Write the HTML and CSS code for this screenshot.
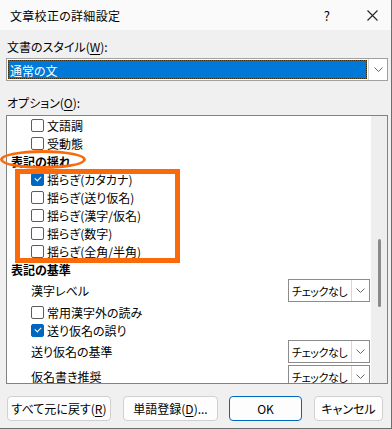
FILE: index.html
```html
<!DOCTYPE html>
<html lang="ja">
<head>
  <meta charset="UTF-8" />
  <title>文章校正の詳細設定</title>
  <link rel="stylesheet" href="styles.css">
</head>
<body>
  <div class="dialog">
    <div class="titlebar">
      <span class="title">文章校正の詳細設定</span>
      <span class="help">?</span>
      <svg class="close" width="11" height="11" viewBox="0 0 11 11">
        <path d="M0.5 0.5 L10.5 10.5 M10.5 0.5 L0.5 10.5" stroke="#222" stroke-width="1.1" fill="none"/>
      </svg>
    </div>

    <div class="content">
      <div class="label first">文書のスタイル(<u>W</u>):</div>
      <div class="combo wide">
        <div class="combo-value"><span class="selected">通常の文</span></div>
        <div class="combo-btn">
          <svg width="9" height="5" viewBox="0 0 9 5"><path d="M0.5 0.5 L4.5 4.5 L8.5 0.5" stroke="#666" fill="none"/></svg>
        </div>
      </div>

      <div class="label second">オプション(<u>O</u>):</div>
      <div class="listbox">
        <div class="items">
          <div class="row"><span class="check"></span>文語調</div>
          <div class="row"><span class="check"></span>受動態</div>
          <div class="row head">表記の揺れ</div>
          <div class="row"><span class="check on"></span>揺らぎ(カタカナ)</div>
          <div class="row"><span class="check"></span>揺らぎ(送り仮名)</div>
          <div class="row"><span class="check"></span>揺らぎ(漢字/仮名)</div>
          <div class="row"><span class="check"></span>揺らぎ(数字)</div>
          <div class="row"><span class="check"></span>揺らぎ(全角/半角)</div>
          <div class="row head">表記の基準</div>
          <div class="row setting">
            <span class="name">漢字レベル</span>
            <div class="combo small">
              <div class="combo-value">チェックなし</div>
              <div class="combo-btn">
                <svg width="9" height="5" viewBox="0 0 9 5"><path d="M0.5 0.5 L4.5 4.5 L8.5 0.5" stroke="#666" fill="none"/></svg>
              </div>
            </div>
          </div>
          <div class="row"><span class="check"></span>常用漢字外の読み</div>
          <div class="row"><span class="check on"></span>送り仮名の誤り</div>
          <div class="row setting">
            <span class="name">送り仮名の基準</span>
            <div class="combo small">
              <div class="combo-value">チェックなし</div>
              <div class="combo-btn">
                <svg width="9" height="5" viewBox="0 0 9 5"><path d="M0.5 0.5 L4.5 4.5 L8.5 0.5" stroke="#666" fill="none"/></svg>
              </div>
            </div>
          </div>
          <div class="row setting">
            <span class="name">仮名書き推奨</span>
            <div class="combo small">
              <div class="combo-value">チェックなし</div>
              <div class="combo-btn">
                <svg width="9" height="5" viewBox="0 0 9 5"><path d="M0.5 0.5 L4.5 4.5 L8.5 0.5" stroke="#666" fill="none"/></svg>
              </div>
            </div>
          </div>
        </div>
        <div class="scrollbar"><div class="thumb"></div></div>
      </div>

      <div class="buttons">
        <button class="btn reset">すべて元に戻す(<u>R</u>)</button>
        <button class="btn words">単語登録(<u>D</u>)...</button>
        <button class="btn ok">OK</button>
        <button class="btn cancel">キャンセル</button>
      </div>
    </div>

    <div class="mark-ellipse"></div>
    <div class="mark-rect"></div>
  </div>
</body>
</html>
```

FILE: styles.css
```css
body {
  margin: 0;
  font-family: "Noto Sans CJK JP", "Noto Sans", sans-serif;
  font-size: 12px;
  color: #000;
  font-feature-settings: "palt";
}
.dialog {
  position: relative;
  width: 391px;
  height: 428px;
  background: #f0f0f0;
  border-right: 1px solid #6d6d6d;
  border-bottom: 1px solid #6d6d6d;
  overflow: hidden;
}
.titlebar {
  height: 30px;
  background: #fafafa;
  display: flex;
  align-items: center;
  padding-left: 10px;
}
.title {
  flex: 1;
  font-size: 12px;
  letter-spacing: 0.3px;
}
.help {
  font-size: 13px;
  margin-right: 37px;
}
.close {
  margin-right: 13px;
}
.content {
  padding: 0 3px 0 6px;
}
.label {
  height: 18px;
  line-height: 18px;
  padding-left: 1px;
}
.label.first {
  margin-top: 8px;
  margin-bottom: 2px;
}
.label.second {
  margin-top: 13px;
  margin-bottom: 3px;
}
u {
  text-decoration-thickness: 1px;
  text-underline-offset: 2px;
}

/* comboboxes */
.combo {
  display: flex;
  background: #fff;
  border: 1px solid #a0a0a0;
  box-sizing: border-box;
}
.combo.wide {
  height: 23px;
  width: 382px;
}
.combo.small {
  height: 23px;
  width: 82px;
  margin-right: 1px;
  border-color: #8c8c8c;
  font-size: 11px;
  letter-spacing: -0.4px;
}
.combo-value {
  flex: 1;
  display: flex;
  align-items: center;
  padding-left: 3px;
  white-space: nowrap;
  overflow: hidden;
}
.combo.wide .combo-value {
  padding: 1px;
}
.selected {
  flex: 1;
  height: 100%;
  box-sizing: border-box;
  background: #0078d7;
  color: #fff;
  line-height: 19px;
  padding-left: 1px;
  border: 1px dotted #3a2a10;
}
.combo-btn {
  width: 17px;
  display: flex;
  align-items: center;
  justify-content: center;
  border-left: 1px solid #d6d6d6;
  background: #fff;
}
.combo.wide .combo-btn {
  width: 18px;
}

/* list */
.listbox {
  display: flex;
  height: 267px;
  border: 1px solid #828282;
  background: #fff;
  overflow: hidden;
}
.items {
  flex: 1;
}
.row {
  height: 18px;
  display: flex;
  align-items: center;
  padding-left: 24px;
  white-space: nowrap;
}
.row.head {
  padding-left: 4px;
  font-weight: bold;
}
.row.setting {
  height: 25px;
  justify-content: space-between;
}
.check {
  width: 13px;
  height: 13px;
  box-sizing: border-box;
  border: 1px solid #5c5c5c;
  border-radius: 2px;
  margin-right: 3px;
  background: #fff;
  position: relative;
}
.check.on {
  background: #0067c0;
  border-color: #0067c0;
}
.check.on::after {
  content: "";
  position: absolute;
  left: 3px;
  top: 2px;
  width: 5px;
  height: 3px;
  border-left: 1px solid #fff;
  border-bottom: 1px solid #fff;
  transform: rotate(-45deg);
}
.scrollbar {
  width: 16px;
  background: #eeeeee;
  position: relative;
}
.thumb {
  position: absolute;
  left: 7px;
  top: 123px;
  width: 3px;
  height: 68px;
  border-radius: 2px;
  background: #8a8a8a;
}

/* buttons */
.buttons {
  display: flex;
  margin-top: 12px;
  padding-left: 1px;
}
.btn {
  height: 25px;
  font-family: inherit;
  font-size: 12px;
  font-feature-settings: "palt";
  background: #fdfdfd;
  border: 1px solid #d0d0d0;
  border-radius: 4px;
  padding: 0;
  color: #000;
}
.btn.reset { width: 104px; }
.btn.words { width: 95px; margin-left: 12px; }
.btn.ok { width: 73px; margin-left: 11px; border-color: #0067c0; }
.btn.cancel { width: 69px; margin-left: 12px; }

/* annotations */
.mark-ellipse {
  position: absolute;
  left: 0;
  top: 150px;
  width: 86px;
  height: 19px;
  box-sizing: border-box;
  border: 3px solid #fa6a0a;
  border-radius: 50%;
}
.mark-rect {
  position: absolute;
  left: 15px;
  top: 169px;
  width: 165px;
  height: 94px;
  box-sizing: border-box;
  border: 5px solid #fa6a0a;
}
```
